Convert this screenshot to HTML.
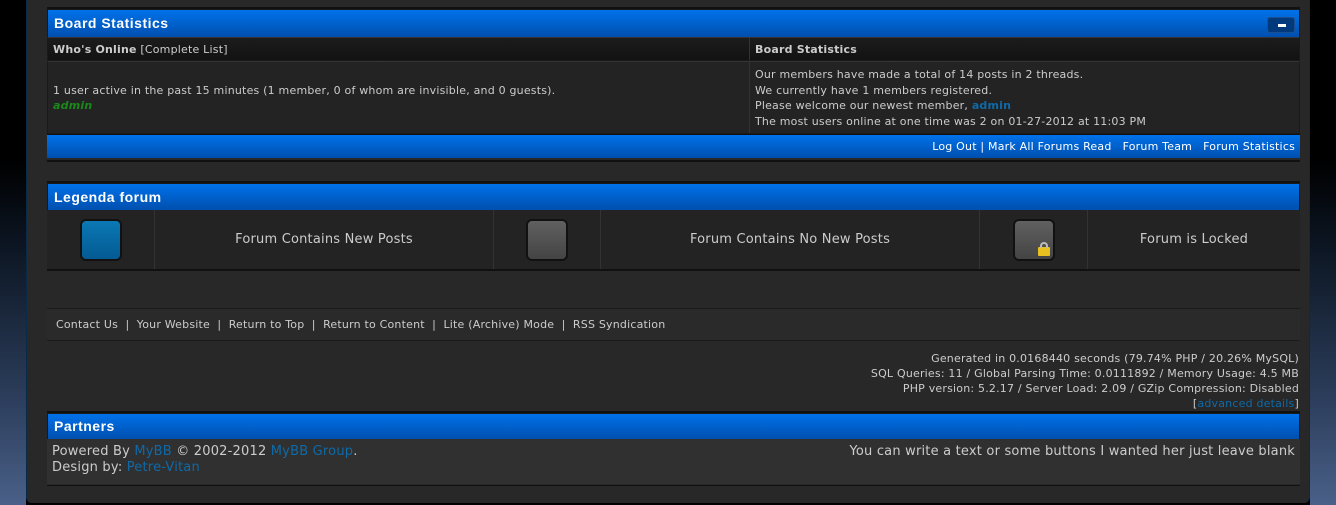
<!DOCTYPE html>
<html><head><meta charset="utf-8"><style>
*{margin:0;padding:0;box-sizing:border-box}
body{width:1336px;height:505px;overflow:hidden;background:#000;font-family:"DejaVu Sans","Liberation Sans",sans-serif;font-size:11px;letter-spacing:0.2px;color:#ccc;position:relative}
.sideL{position:absolute;left:0;top:0;width:26px;height:505px;background:linear-gradient(#000 0,#000 160px,#0b1420 240px,#2c3e5c 400px,#4a6088 505px)}
.sideR{position:absolute;right:0;top:0;width:26px;height:505px;background:linear-gradient(#000 0,#000 160px,#0b1420 240px,#2c3e5c 400px,#4a6088 505px)}
.wrap{position:absolute;left:26px;top:0;width:1284px;height:503px;background:#282828;border-radius:0 0 6px 6px;border-left:1px solid #0a2a4a;border-right:1px solid #0a2a4a}
.box{position:absolute;left:20px;width:1253px;border-top:2px solid #111;border-bottom:2px solid #111}
.head{height:28px;background:linear-gradient(#0072ea,#004fae);color:#fff;font-weight:bold;font-family:"Liberation Sans",sans-serif;font-size:14px;letter-spacing:0.5px;padding:5px 6px;border:1px solid #1a1a1a;border-bottom:none}
.a{color:#0e6aa8}
.blue{height:24px;background:linear-gradient(#0072ea,#004fae);color:#fff;text-align:right;padding:5px 5px}
.icon{width:42px;height:42px;border-radius:6px;border:2px solid #111}
.big{font-size:13px;letter-spacing:0.2px}
</style></head><body>
<div class="sideL"></div><div class="sideR"></div>
<div class="wrap">
<div class="box" style="top:7px;height:155px">
 <div class="head">Board Statistics<span style="position:absolute;right:5px;top:8px;width:28px;height:16px;background:#003a7c;border-radius:3px;border:1px solid #1b4f8f"><span style="position:absolute;left:10px;top:6px;width:8px;height:3px;background:#fff"></span></span></div>
 <div style="display:flex;height:24px;background:linear-gradient(#1c1c1c,#121212);border:1px solid #1a1a1a;border-top:1px solid #333">
  <div style="width:702px;padding:5px 5px;border-right:1px solid #333"><b>Who's Online</b> [Complete List]</div>
  <div style="flex:1;padding:5px 5px"><b>Board Statistics</b></div>
 </div>
 <div style="display:flex;height:73px;background:#232323;border:1px solid #1a1a1a;border-top:1px solid #333">
  <div style="width:702px;padding:21px 5px 0;border-right:1px solid #333;line-height:15px">1 user active in the past 15 minutes (1 member, 0 of whom are invisible, and 0 guests).<br><b style="color:#1a8a1a;font-style:italic">admin</b></div>
  <div style="flex:1;padding:5px 5px;line-height:15.5px">Our members have made a total of 14 posts in 2 threads.<br>We currently have 1 members registered.<br>Please welcome our newest member, <b class="a">admin</b><br>The most users online at one time was 2 on 01-27-2012 at 11:03 PM</div>
 </div>
 <div class="blue" style="border-top:1px solid #111">Log Out | Mark All Forums Read &nbsp; Forum Team &nbsp; Forum Statistics</div>
</div>

<div class="box" style="top:181px;height:90px">
 <div class="head" style="height:27px">Legenda forum</div>
 <div class="big" style="display:flex;height:59px;background:#232323;text-align:center;line-height:59px">
  <div style="width:108px;border-right:1px solid #333;display:flex;align-items:center;justify-content:center"><div class="icon" style="background:linear-gradient(#0a78b4,#045a92)"></div></div>
  <div style="width:339px;border-right:1px solid #333">Forum Contains New Posts</div>
  <div style="width:107px;border-right:1px solid #333;display:flex;align-items:center;justify-content:center"><div class="icon" style="background:linear-gradient(#606060,#444)"></div></div>
  <div style="width:379px;border-right:1px solid #333">Forum Contains No New Posts</div>
  <div style="width:108px;border-right:1px solid #333;display:flex;align-items:center;justify-content:center"><div class="icon" style="background:linear-gradient(#606060,#444);position:relative"><span style="position:absolute;right:3px;bottom:3px;width:12px;height:9px;background:#e8c020;border-radius:1px"></span><span style="position:absolute;right:5px;bottom:11px;width:8px;height:6px;border:2px solid #bbb;border-bottom:none;border-radius:4px 4px 0 0"></span></div></div>
  <div style="flex:1">Forum is Locked</div>
 </div>
</div>

<div style="position:absolute;left:20px;top:308px;width:1253px;height:33px;background:#2a2a2a;border-top:1px solid #1a1a1a;border-bottom:1px solid #1a1a1a;padding:9px 9px;color:#ccc">Contact Us &nbsp;| &nbsp;Your Website &nbsp;| &nbsp;Return to Top &nbsp;| &nbsp;Return to Content &nbsp;| &nbsp;Lite (Archive) Mode &nbsp;| &nbsp;RSS Syndication</div>

<div style="position:absolute;right:10px;top:351px;text-align:right;line-height:15px">Generated in 0.0168440 seconds (79.74% PHP / 20.26% MySQL)<br>SQL Queries: 11 / Global Parsing Time: 0.0111892 / Memory Usage: 4.5 MB<br>PHP version: 5.2.17 / Server Load: 2.09 / GZip Compression: Disabled<br>[<span class="a">advanced details</span>]</div>

<div class="box" style="top:411px;height:75px;border-bottom:1px solid #111">
 <div class="head" style="height:26px;padding-top:4px">Partners</div>
 <div class="big" style="height:45px;background:#303030;padding:5px 5px;line-height:16px;position:relative">Powered By <span class="a">MyBB</span> © 2002-2012 <span class="a">MyBB Group</span>.<br>Design by: <span class="a">Petre-Vitan</span><span style="position:absolute;right:5px;top:5px">You can write a text or some buttons I wanted her just leave blank</span></div>
</div>
</div>
</body></html>
